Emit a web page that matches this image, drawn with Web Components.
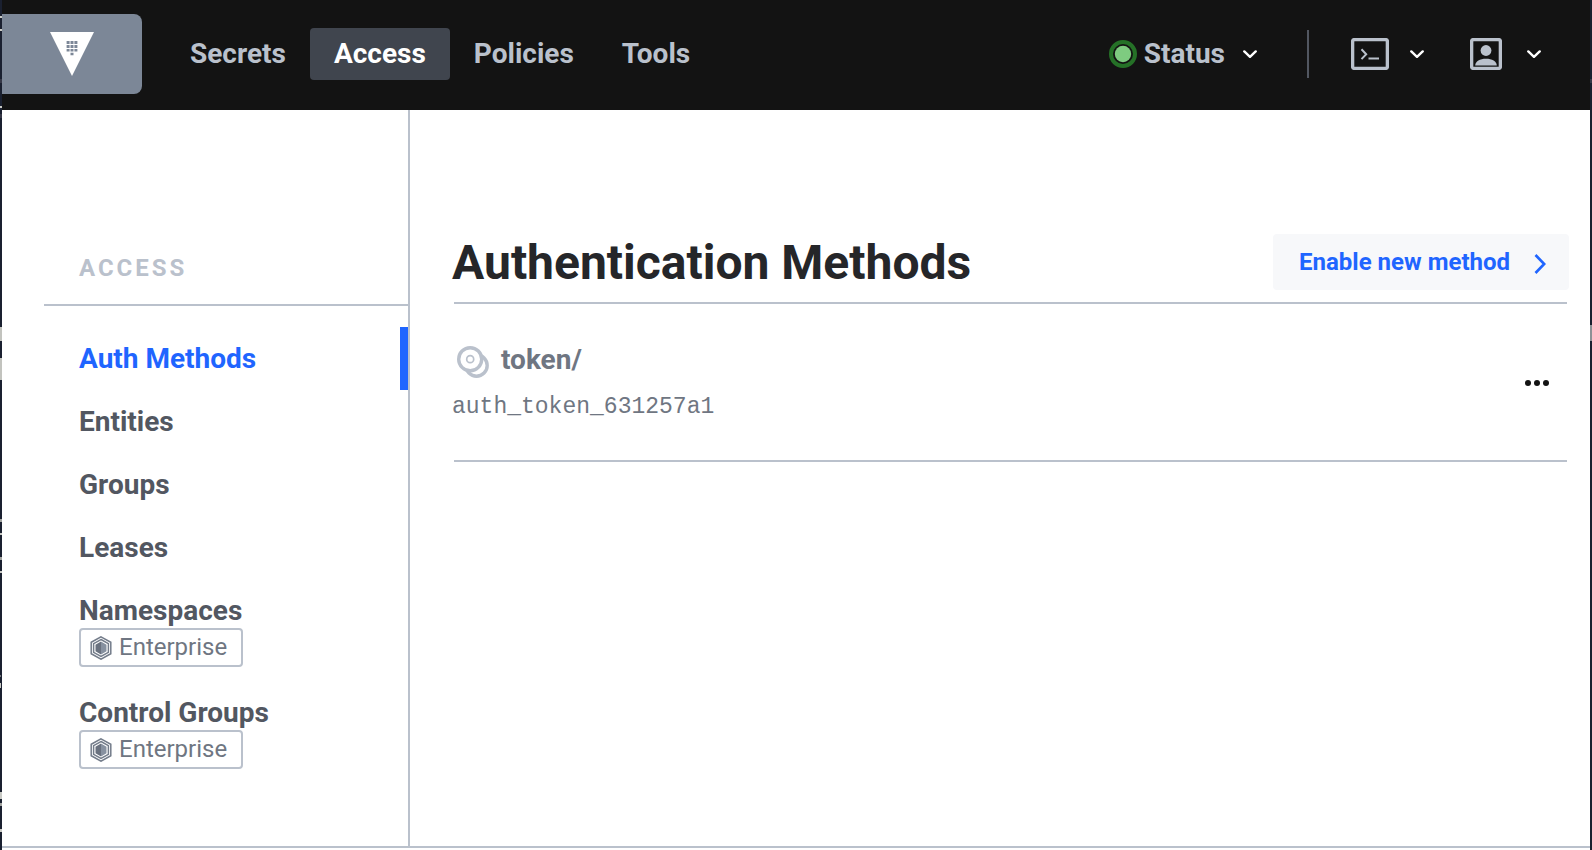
<!DOCTYPE html>
<html lang="en">
<head>
<meta charset="utf-8">
<meta name="viewport" content="width=device-width, initial-scale=1">
<title>Vault</title>
<style>
  body {
    margin: 0;
    font-family: Roboto, "Noto Sans", sans-serif;
    font-size: 28px;
    font-weight: 700;
    color: #252629;
    --black: #131313;
    --line: #bac1cc;
    --blue: #1f65ff;
    --grey: #6f7682;
    background: #1a2030;
  }
</style>
</head>
<body>
<vault-app>
  <vault-header slot="header">
    <nav-item href="#secrets">Secrets</nav-item>
    <nav-item href="#access" current>Access</nav-item>
    <nav-item href="#policies">Policies</nav-item>
    <nav-item href="#tools">Tools</nav-item>
  </vault-header>
  <side-menu slot="side" heading="Access">
    <menu-item href="#auth" current>Auth Methods</menu-item>
    <menu-item href="#entities">Entities</menu-item>
    <menu-item href="#groups">Groups</menu-item>
    <menu-item href="#leases">Leases</menu-item>
    <menu-item href="#namespaces">Namespaces<edition-badge slot="badge">Enterprise</edition-badge></menu-item>
    <menu-item href="#control-groups">Control Groups<edition-badge slot="badge">Enterprise</edition-badge></menu-item>
  </side-menu>
  <page-header>
    Authentication Methods
    <action-link slot="action" href="#enable">Enable new method</action-link>
  </page-header>
  <method-row accessor="auth_token_631257a1">token/</method-row>
</vault-app>

<script>
const define = (name, html, setup) => {
  const template = document.createElement('template');
  template.innerHTML = html;
  customElements.define(name, class extends HTMLElement {
    connectedCallback() {
      if (this.shadowRoot) return;
      const root = this.attachShadow({ mode: 'open' });
      root.append(template.content.cloneNode(true));
      if (setup) setup(this, root);
    }
  });
};

const setLink = (host, root) => {
  const a = root.querySelector('a');
  a.href = host.getAttribute('href');
  if (host.hasAttribute('current')) a.setAttribute('aria-current', 'page');
};

define('vault-app', `
  <style>
    :host {
      display: block; padding: 0 2px;
      background:
        linear-gradient(#c9cac5, #c9cac5) 0 16px / 2px 2px,
        linear-gradient(#c9cac5, #c9cac5) 0 29px / 2px 2px,
        linear-gradient(#363847, #363847) 0 79px / 2px 4px,
        linear-gradient(#c9cac5, #c9cac5) 0 106px / 2px 2px,
        linear-gradient(#363847, #363847) 0 114px / 2px 4px,
        linear-gradient(#c2c3be, #c2c3be) 0 327px / 2px 14px,
        linear-gradient(#c2c3be, #c2c3be) 0 358px / 2px 22px,
        linear-gradient(#a0a29f, #a0a29f) 0 519px / 2px 3px,
        linear-gradient(#c9cac5, #c9cac5) 0 533px / 2px 2px,
        linear-gradient(#a0a29f, #a0a29f) 0 557px / 2px 3px,
        linear-gradient(#c9cac5, #c9cac5) 0 571px / 2px 2px,
        linear-gradient(#74777c, #74777c) 0 675px / 1px 2px,
        linear-gradient(#c9cac5, #c9cac5) 0 683px / 1px 5px,
        linear-gradient(#c9cac5, #c9cac5) 0 792px / 2px 7px,
        linear-gradient(#a0a29f, #a0a29f) 0 803px / 2px 3px,
        linear-gradient(#c9cac5, #c9cac5) 0 829px / 2px 3px,
        linear-gradient(#363847, #363847) 100% 79px / 2px 4px,
        linear-gradient(#8d9095, #8d9095) 100% 325px / 2px 16px,
        #1a2030;
      background-repeat: no-repeat;
    }
    .page { display: flex; flex-direction: column; min-height: 100vh; background: #fff; }
    .body { display: flex; flex: 1; }
    main { flex: 1; min-width: 0; padding: 124px 21px 32px 42px; }
    footer { border-top: 2px solid var(--line); height: 2px; }
  </style>
  <div class="page">
    <slot name="header"></slot>
    <div class="body">
      <slot name="side"></slot>
      <main><slot></slot></main>
    </div>
    <footer></footer>
  </div>`);

const chevron = `<svg class="chevron" width="14" height="8" viewBox="0 0 14 8" fill="none" stroke="#fff" stroke-width="2.4" stroke-linecap="round" stroke-linejoin="round" aria-hidden="true"><path d="M1.3 1.4 7 6.8l5.700-5.400"/></svg>`;

define('vault-header', `
  <style>
    :host { display: block; background: var(--black); }
    header { display: flex; align-items: center; height: 110px; padding-bottom: 2px; box-sizing: border-box; }
    .logo { display: flex; align-items: center; justify-content: center; width: 140px; height: 80px; background: #7c8797; border-radius: 0 8px 8px 0; }
    nav { display: flex; flex: 1; margin-left: 24px; }
    .tools { display: flex; align-items: center; padding-right: 49px; }
    button { display: flex; align-items: center; height: 52px; padding: 0; border: 0; background: none; color: var(--line); font: inherit; line-height: 52px; gap: 21px; }
    .status { display: flex; align-items: center; gap: 7px; }
    .state { gap: 18px; }
    .rule { width: 2px; height: 48px; background: #525761; margin: 0 42px 0 50px; }
    .user { margin-left: 46px; }
    .user { gap: 25px; }
  </style>
  <header>
    <a class="logo" href="#home" aria-label="Vault">
      <svg width="44" height="44" viewBox="0 0 44 44" aria-hidden="true">
        <path d="M0 0h44L22 44z" fill="#fff"/>
        <path fill="#7c8797" d="M16.600 9h3v3h-3zM20.500 9h3v3h-3zM24.400 9h3v3h-3zM16.600 13h3v3h-3zM20.500 13h3v3h-3zM24.400 13h3v3h-3zM16.600 17h3v2.600h-3zM20.500 17h3v2.600h-3zM24.400 17h3v2.600h-3zM20.500 20.700h3v2.600h-3z"/>
      </svg>
    </a>
    <nav aria-label="Main"><slot></slot></nav>
    <div class="tools">
      <button class="state" type="button">
        <span class="status">
          <svg width="28" height="28" viewBox="0 0 28 28" aria-hidden="true"><circle cx="14" cy="14" r="12" fill="none" stroke="#257127" stroke-width="4"/><circle cx="14" cy="14" r="8.200" fill="#7ecb80"/></svg>
          Status
        </span>
        ${chevron}
      </button>
      <div class="rule"></div>
      <button type="button" aria-label="Console">
        <svg width="38" height="32" viewBox="0 0 38 32" fill="none" stroke="#bac1cc" aria-hidden="true"><rect x="1.600" y="1.600" width="34.800" height="28.800" rx="2" stroke-width="3.400"/><path d="m10.500 11.300 4.700 4.900-4.700 4.900M17.500 20.500h10.500" stroke-width="2"/></svg>
        ${chevron}
      </button>
      <button class="user" type="button" aria-label="User">
        <svg width="32" height="32" viewBox="0 0 32 32" aria-hidden="true"><rect x="1.600" y="1.600" width="28.800" height="28.800" rx="2" fill="none" stroke="#bac1cc" stroke-width="3.400"/><circle cx="16" cy="12.500" r="5.400" fill="#bac1cc"/><path d="M5.200 27.500c0-4.200 4.800-6.700 10.800-6.700s10.800 2.500 10.800 6.700z" fill="#bac1cc"/></svg>
        ${chevron}
      </button>
    </div>
  </header>`);

define('nav-item', `
  <style>
    :host { display: block; }
    a { display: block; padding: 0 24px; line-height: 52px; border-radius: 4px; color: var(--line); text-decoration: none; }
    a[aria-current] { background: #40454e; color: #fff; }
  </style>
  <a><slot></slot></a>`, setLink);

define('side-menu', `
  <style>
    :host { display: block; box-sizing: border-box; flex: 0 0 408px; border-right: 2px solid var(--line); padding: 142px 0 32px 42px; }
    h2 { margin: 0; padding: 0 0 20px 35px; border-bottom: 2px solid var(--line); font-size: 24px; font-weight: 700; line-height: 32px; letter-spacing: 3px; text-transform: uppercase; color: var(--line); }
    nav { padding-top: 21px; }
  </style>
  <h2></h2>
  <nav><slot></slot></nav>`, (host, root) => {
    const heading = host.getAttribute('heading');
    root.querySelector('h2').textContent = heading;
    root.querySelector('nav').setAttribute('aria-label', heading);
  });

define('menu-item', `
  <style>
    :host { display: block; }
    a { display: flex; flex-direction: column; align-items: flex-start; padding: 14px 0 14px 35px; line-height: 35px; color: #525761; text-decoration: none; border-right: 8px solid transparent; }
    a[aria-current] { color: var(--blue); border-color: var(--blue); }
  </style>
  <a><span><slot></slot></span><slot name="badge"></slot></a>`, setLink);

define('edition-badge', `
  <style>
    :host { display: inline-flex; align-items: center; gap: 7px; box-sizing: border-box; height: 39px; padding: 0 14px 0 9px; border: 2px solid var(--line); border-radius: 4px; font-size: 24px; font-weight: 400; line-height: 35px; color: var(--grey); }
  </style>
  <svg width="22" height="24" viewBox="0 0 22 24" aria-hidden="true">
    <path d="M11 .8 20.800 6.300v11.400L11 23.200 1.200 17.700V6.300z" fill="none" stroke="#737c8a" stroke-width="1.500"/>
    <path d="M11 3.500 18.400 7.700v8.600L11 20.500 3.600 16.300V7.700z" fill="none" stroke="#737c8a" stroke-width="1.500"/>
    <path d="M11 5.600 5.500 8.800v6.400L11 18.400z" fill="#69717f"/>
    <path d="M11 5.600 16.500 8.800v6.400L11 18.400z" fill="#8791a0"/>
  </svg>
  <slot></slot>`);

define('page-header', `
  <style>
    :host { display: flex; align-items: center; justify-content: space-between; padding-bottom: 12px; }
    h1 { margin: 0; font-size: 48px; font-weight: 700; line-height: 58px; height: 56px; }
  </style>
  <h1><slot></slot></h1>
  <slot name="action"></slot>`);

define('action-link', `
  <style>
    :host { display: block; }
    a { display: flex; align-items: center; gap: 24px; padding: 0 23px 0 26px; height: 56px; border-radius: 4px; background: #f7f8fa; color: var(--blue); font-size: 24px; line-height: 56px; text-decoration: none; }
    svg { margin-top: 4px; }
  </style>
  <a><span><slot></slot></span><svg width="12" height="20" viewBox="0 0 12 20" fill="none" stroke="#1f65ff" stroke-width="2.600" aria-hidden="true"><path d="m1.500 1 8.700 9-8.700 9"/></svg></a>`, setLink);

define('method-row', `
  <style>
    :host { display: block; margin: 0 2px; border: solid var(--line); border-width: 2px 0; }
    article { display: flex; align-items: center; justify-content: space-between; height: 156px; color: var(--grey); }
    .info { display: grid; gap: 8px; margin-left: -2px; }
    .name { display: flex; align-items: center; gap: 12px; padding-left: 5px; line-height: 42px; }
    .name svg { margin-top: 4px; }
    code { font: 400 23px/36px "Liberation Mono", monospace; }
    button { display: flex; padding: 18px 18px 16px; border: 0; background: none; }
  </style>
  <article>
    <div class="info">
      <div class="name">
        <svg width="32" height="32" viewBox="0 0 32 32" fill="none" stroke="#bac1cc" aria-hidden="true"><circle cx="19.500" cy="19.500" r="10.700" stroke-width="3.400"/><circle cx="13.200" cy="13.200" r="11.500" fill="#fff" stroke-width="3.400"/><circle cx="13.200" cy="13.200" r="3.500" stroke-width="1.700"/></svg>
        <span><slot></slot></span>
      </div>
      <code></code>
    </div>
    <button type="button" aria-label="More options">
      <svg width="24" height="6" viewBox="0 0 24 6" fill="#131313" aria-hidden="true"><circle cx="3" cy="3" r="3"/><circle cx="12" cy="3" r="3"/><circle cx="21" cy="3" r="3"/></svg>
    </button>
  </article>`, (host, root) => {
    root.querySelector('code').textContent = host.getAttribute('accessor');
  });
</script>
</body>
</html>
